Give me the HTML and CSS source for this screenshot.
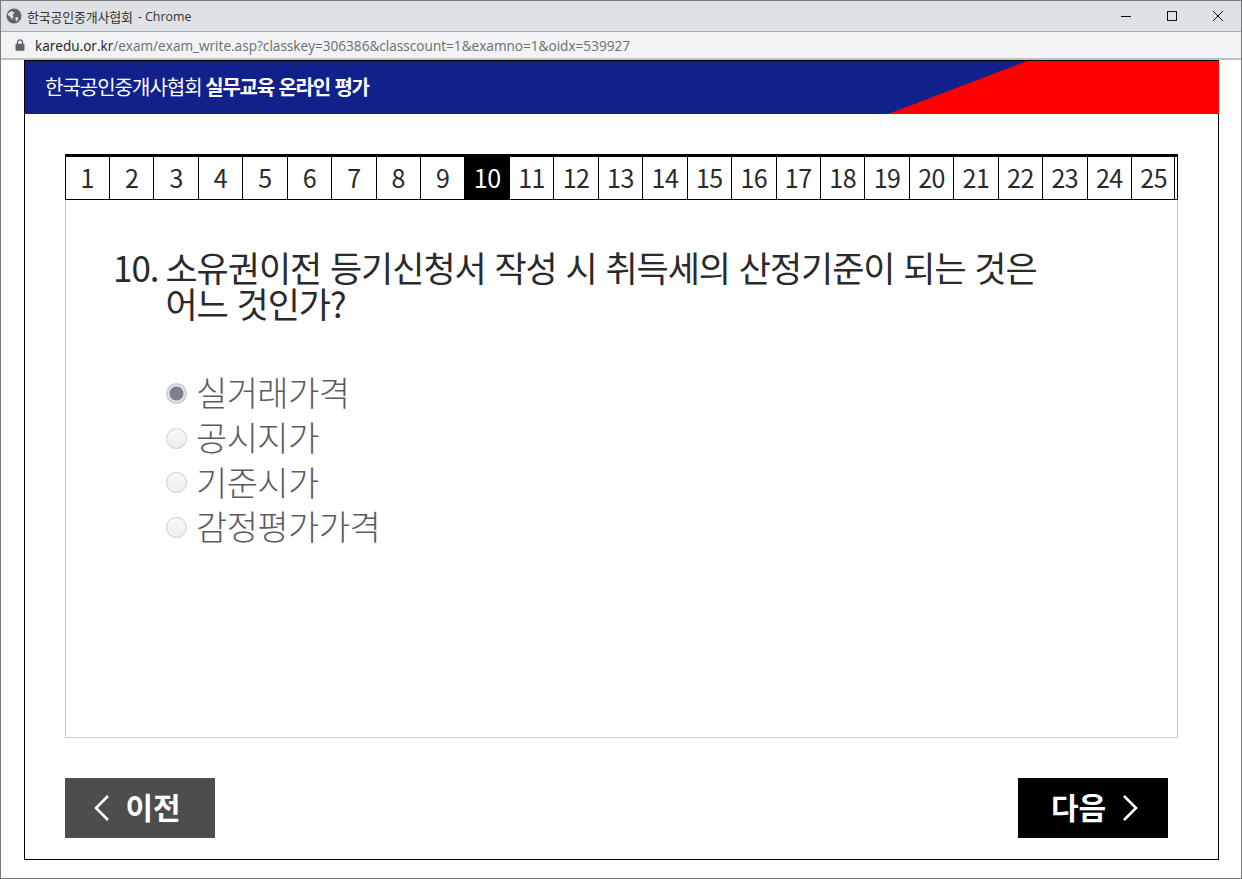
FILE: index.html
```html
<!DOCTYPE html>
<html lang="ko">
<head>
<meta charset="utf-8">
<title>한국공인중개사협회 - Chrome</title>
<link rel="stylesheet" href="styles.css">
</head>
<body>
<div class="window">
  <div class="titlebar">
    <svg class="globe" width="16" height="16" viewBox="0 0 16 16"><circle cx="8" cy="8" r="7.5" fill="#5f6368"/><path d="M3 4.5 6 3 8.5 5 6.5 7 7.5 8.5 6 11.5 4 8.5 1.5 7ZM9.5 9 12.5 9.5 11 13.5 9.5 12Z" fill="#dee1e6"/></svg>
    <span class="title">한국공인중개사협회</span><span class="title-app">- Chrome</span>
    <div class="controls">
      <svg width="12" height="12" viewBox="0 0 12 12"><path d="M1 6.5H11" stroke="#111" fill="none"/></svg>
      <svg width="12" height="12" viewBox="0 0 12 12"><rect x="1.5" y="1.5" width="9" height="9" stroke="#111" fill="none"/></svg>
      <svg width="12" height="12" viewBox="0 0 12 12"><path d="M1 1 11 11M11 1 1 11" stroke="#111" fill="none"/></svg>
    </div>
  </div>
  <div class="addressbar">
    <svg width="10" height="12" viewBox="0 0 10 12"><path d="M2.5 5V3.4a2.5 2.5 0 0 1 5 0V5" stroke="#5f6368" stroke-width="1.3" fill="none"/><rect x="0.5" y="4.8" width="9" height="7" rx="1" fill="#5f6368"/></svg>
    <span class="url"><span class="host">karedu.or.kr</span>/exam/exam_write.asp?classkey=306386&amp;classcount=1&amp;examno=1&amp;oidx=539927</span>
  </div>
  <div class="page">
    <div class="frame">
      <header class="banner">
        <h1 class="banner-title">한국공인중개사협회 <strong>실무교육 온라인 평가</strong></h1>
        <svg class="banner-red" width="331" height="53" viewBox="0 0 331 53"><polygon points="139,0 331,0 331,53 0,53" fill="#ff0000"/></svg>
      </header>
      <main class="exam">
        <nav class="tabs">
          <a class="tab">1</a><a class="tab">2</a><a class="tab">3</a><a class="tab">4</a><a class="tab">5</a>
          <a class="tab">6</a><a class="tab">7</a><a class="tab">8</a><a class="tab">9</a><a class="tab active">10</a>
          <a class="tab">11</a><a class="tab">12</a><a class="tab">13</a><a class="tab">14</a><a class="tab">15</a>
          <a class="tab">16</a><a class="tab">17</a><a class="tab">18</a><a class="tab">19</a><a class="tab">20</a>
          <a class="tab">21</a><a class="tab">22</a><a class="tab">23</a><a class="tab">24</a><a class="tab">25</a>
        </nav>
        <section class="panel">
          <div class="question">
            <span class="qnum">10.</span>
            <p class="qtext">소유권이전 등기신청서 작성 시 취득세의 산정기준이 되는 것은 어느 것인가?</p>
          </div>
          <div class="options">
            <label class="option"><span class="radio checked"></span><span class="option-text">실거래가격</span></label>
            <label class="option"><span class="radio"></span><span class="option-text">공시지가</span></label>
            <label class="option"><span class="radio"></span><span class="option-text">기준시가</span></label>
            <label class="option"><span class="radio"></span><span class="option-text">감정평가가격</span></label>
          </div>
        </section>
        <div class="actions">
          <a class="btn prev"><svg width="16" height="28" viewBox="0 0 16 28"><path d="M14 2 2 14 14 26" stroke="#fff" stroke-width="2.6" fill="none"/></svg><span class="btn-text">이전</span></a>
          <a class="btn next"><span class="btn-text">다음</span><svg width="16" height="28" viewBox="0 0 16 28"><path d="M2 2 14 14 2 26" stroke="#fff" stroke-width="2.6" fill="none"/></svg></a>
        </div>
      </main>
    </div>
  </div>
</div>
</body>
</html>
```

FILE: styles.css
```css
* { box-sizing: border-box; }
html, body { margin: 0; height: 100%; background: #fff; }
body { font-family: "Noto Sans CJK KR", "Noto Sans", sans-serif; overflow: hidden; }
.window { width: 1242px; height: 879px; border: 1px solid #7a7a7a; display: flex; flex-direction: column; }
.titlebar { height: 31px; flex: none; background: #dee1e6; border-bottom: 1px solid #a9acaf; display: flex; align-items: center; padding-left: 5px; font-size: 13px; color: #333; }
.globe { margin-right: 5px; }
.title { margin-right: 5px; letter-spacing: -0.2px; }
.title-app { font-family: "Open Sans", "Noto Sans", sans-serif; font-size: 12.4px; }
.controls { margin-left: auto; display: flex; gap: 34px; padding-right: 17px; align-items: center; }
.addressbar { height: 28px; flex: none; background: #f1f3f4; border-bottom: 2px solid #bfc1c3; display: flex; align-items: center; padding-left: 14px; gap: 10px; }
.url { font-family: "Open Sans", sans-serif; font-size: 13.62px; color: #6a6e72; }
.host { color: #202124; }
.page { flex: 1; padding: 0 22px 18px 23px; display: flex; min-height: 0; }
.frame { flex: 1; border: 1px solid #000; display: flex; flex-direction: column; }
.banner { height: 53px; flex: none; margin-right: -1px; background: #10218b; color: #fff; display: flex; align-items: center; padding: 0 0 2px 20px; position: relative; }
.banner-title { margin: 0; font-size: 20px; font-weight: 400; letter-spacing: -1px; }
.banner-title strong { margin-left: -1px; font-weight: 700; letter-spacing: -1.2px; }
.banner-red { position: absolute; right: 0; top: 0; }
.exam { flex: 1; padding: 40px 40px 0 40px; display: flex; flex-direction: column; }
.tabs { display: grid; grid-template-columns: repeat(25, 44.44px) 1fr; height: 46px; margin-left: -0.5px; border-top: 3px solid #000; border-bottom: 1px solid #000; border-right: 1px solid #000; }
.tab { display: flex; align-items: center; justify-content: center; padding-bottom: 2px; border-left: 1px solid #000; font-size: 25px; color: #2a2a2a; letter-spacing: -0.5px; line-height: 1; }
.tab:last-child { border-right: 1px solid #000; padding-left: 1px; }
.tab.active { background: #000; color: #fff; }
.panel { height: 538px; border: 1px solid #ccc; border-top: 0; padding: 49px 100px 0 47px; }
.question { display: flex; gap: 7px; font-size: 35px; line-height: 36px; color: #2a2a2a; letter-spacing: -1.05px; }
.qtext { margin: 0; word-break: keep-all; }
.options { margin-top: 50px; padding-left: 53px; display: flex; flex-direction: column; }
.option { height: 44.8px; display: flex; align-items: center; gap: 9px; font-size: 34px; font-weight: 300; color: #5c5c5c; letter-spacing: -0.6px; }
.option-text { margin-bottom: 4px; }
.radio { width: 21px; height: 21px; flex: none; border-radius: 50%; border: 1px solid #c8cacc; background: linear-gradient(#f8f8f8, #eeeeee); }
.radio.checked { border: 2px solid #c5d0da; background: radial-gradient(circle, #7c8086 0 6.5px, #e8edf1 7.5px); }
.actions { display: flex; justify-content: space-between; margin-top: 40px; padding-right: 10px; }
.btn { width: 150px; height: 60px; display: flex; align-items: center; justify-content: center; color: #fff; font-size: 30px; font-weight: 700; }
.btn-text { margin-bottom: 4px; }
.prev { background: #4d4d4d; gap: 15px; padding-right: 5px; }
.next { background: #000; gap: 16px; padding-left: 3px; }
```
